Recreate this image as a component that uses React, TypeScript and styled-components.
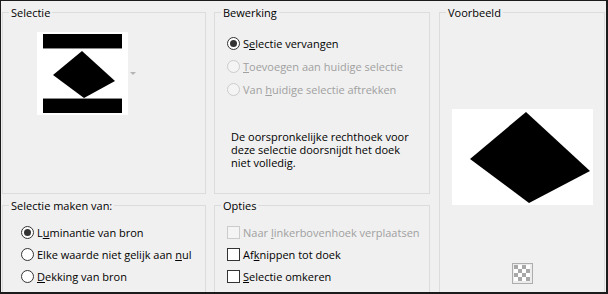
import React from "react";
import styled, { createGlobalStyle } from "styled-components";

const GlobalStyle = createGlobalStyle`
  html, body { margin: 0; padding: 0; background: #ffffff; }
  body { font-family: "Open Sans", "Noto Sans", sans-serif; font-size: 11px; color: #000; }
`;

const Window = styled.div`
  width: 608px;
  height: 294px;
  box-sizing: border-box;
  border-style: solid;
  border-color: #1b1b1b;
  border-width: 1px 2px 2px 1px;
  background: #f0f0f0;
  overflow: hidden;
  padding: 4px 0 0 1px;
  display: grid;
  grid-template-columns: 204px 216px 167px;
  grid-template-rows: 189px 100px;
  column-gap: 8px;
  row-gap: 4px;
`;

const Group = styled.fieldset<{ $span?: boolean; $shift?: number }>`
  margin: 0 0 0 ${(p) => p.$shift ?? 0}px;
  padding: 0;
  min-width: 0;
  box-sizing: border-box;
  border: 1px solid #dcdcdc;
  display: flex;
  flex-direction: column;
  grid-row: ${(p) => (p.$span ? "1 / span 2" : "auto")};
  grid-column: ${(p) => (p.$span ? "3" : "auto")};
  height: ${(p) => (p.$span ? "300px" : "auto")};
`;

const Legend = styled.legend`
  margin-left: 6px;
  padding: 0 2px;
  line-height: 15px;
  font-size: 11px;
  color: #000;
`;

const ImageRow = styled.div`
  display: flex;
  align-items: center;
  gap: 2px;
  margin: 12px 0 0 34px;
`;

const OptionList = styled.div<{ $top: number; $left: number; $row: number }>`
  display: flex;
  flex-direction: column;
  margin-top: ${(p) => p.$top}px;
  padding-left: ${(p) => p.$left}px;
  & > * {
    height: ${(p) => p.$row}px;
  }
`;

const Option = styled.div<{ $disabled?: boolean }>`
  display: flex;
  align-items: center;
  gap: 3px;
  white-space: nowrap;
  color: ${(p) => (p.$disabled ? "#a0a0a0" : "#000")};
`;

const RadioCircle = styled.span<{ $checked?: boolean; $disabled?: boolean }>`
  width: 13px;
  height: 13px;
  box-sizing: border-box;
  border-radius: 50%;
  border: 1px solid ${(p) => (p.$disabled ? "#cccccc" : "#333333")};
  background: ${(p) => (p.$disabled ? "#f4f4f4" : "#ffffff")};
  display: flex;
  align-items: center;
  justify-content: center;
  flex: none;
  &::after {
    content: "";
    display: ${(p) => (p.$checked ? "block" : "none")};
    width: 7px;
    height: 7px;
    border-radius: 50%;
    background: #333333;
  }
`;

const CheckSquare = styled.span<{ $disabled?: boolean }>`
  width: 13px;
  height: 13px;
  box-sizing: border-box;
  border: 1px solid ${(p) => (p.$disabled ? "#cccccc" : "#333333")};
  background: ${(p) => (p.$disabled ? "#f4f4f4" : "#ffffff")};
  flex: none;
`;

const Key = styled.span`
  text-decoration: underline;
  text-underline-offset: 1px;
`;

const Note = styled.p`
  margin: 29px 0 0 0;
  padding-left: 16px;
  line-height: 13px;
  color: #000;
`;

const PreviewBox = styled.div`
  margin: 89px auto 0;
  width: 141px;
  height: 96px;
  display: flex;
`;

const CheckerButton = styled.div`
  margin: 58px auto 0;
  width: 21px;
  height: 21px;
  box-sizing: border-box;
  border: 1px solid #adadad;
  background: #ececec;
  padding: 1px;
`;

const Checker = styled.div`
  width: 16px;
  height: 16px;
  background-color: #ffffff;
  background-image: conic-gradient(#ffffff 25%, #a8a8a8 0 50%, #ffffff 0 75%, #a8a8a8 0);
  background-size: 8px 8px;
`;

function Radio({ checked, disabled, children }: { checked?: boolean; disabled?: boolean; children: React.ReactNode }) {
  return (
    <Option $disabled={disabled}>
      <RadioCircle $checked={checked} $disabled={disabled} />
      <span>{children}</span>
    </Option>
  );
}

function Check({ disabled, children }: { disabled?: boolean; children: React.ReactNode }) {
  return (
    <Option $disabled={disabled}>
      <CheckSquare $disabled={disabled} />
      <span>{children}</span>
    </Option>
  );
}

export default function App() {
  return (
    <>
      <GlobalStyle />
      <Window>
        <Group>
          <Legend>Selectie</Legend>
          <ImageRow>
            <svg width="91" height="83" viewBox="0 0 91 83">
              <rect x="0" y="0" width="91" height="83" fill="#ffffff" />
              <rect x="6" y="2" width="79" height="14" fill="#000000" />
              <rect x="6" y="16" width="79" height="1" fill="#8a8a8a" />
              <rect x="6" y="66" width="79" height="1" fill="#8a8a8a" />
              <rect x="6" y="67" width="79" height="14" fill="#000000" />
              <polygon points="16,43 45,19 78,49 47,66" fill="#000000" />
            </svg>
            <svg width="6" height="3" viewBox="0 0 6 3">
              <polygon points="0,0 6,0 3,3" fill="#b4b4b4" />
            </svg>
          </ImageRow>
        </Group>

        <Group>
          <Legend>Bewerking</Legend>
          <OptionList $top={12} $left={12} $row={23}>
            <Radio checked>
              S<Key>e</Key>lectie vervangen
            </Radio>
            <Radio disabled>
              <Key>T</Key>oevoegen aan huidige selectie
            </Radio>
            <Radio disabled>
              Van <Key>h</Key>uidige selectie aftrekken
            </Radio>
          </OptionList>
          <Note>
            De oorspronkelijke rechthoek voor
            <br />
            deze selectie doorsnijdt het doek
            <br />
            niet volledig.
          </Note>
        </Group>

        <Group $span $shift={1}>
          <Legend>Voorbeeld</Legend>
          <PreviewBox>
            <svg width="141" height="96" viewBox="0 0 141 96">
              <rect x="0" y="0" width="141" height="96" fill="#ffffff" />
              <polygon points="18,50 74,3 138,62 77,94" fill="#000000" />
            </svg>
          </PreviewBox>
          <CheckerButton>
            <Checker />
          </CheckerButton>
        </Group>

        <Group>
          <Legend>Selectie maken van:</Legend>
          <OptionList $top={8} $left={18} $row={22}>
            <Radio checked>
              L<Key>u</Key>minantie van bron
            </Radio>
            <Radio>
              Elke waarde niet gelijk aan <Key>n</Key>ul
            </Radio>
            <Radio>
              <Key>D</Key>ekking van bron
            </Radio>
          </OptionList>
        </Group>

        <Group>
          <Legend>Opties</Legend>
          <OptionList $top={8} $left={12} $row={22}>
            <Check disabled>
              Naar <Key>l</Key>inkerbovenhoek verplaatsen
            </Check>
            <Check>
              Af<Key>k</Key>nippen tot doek
            </Check>
            <Check>
              <Key>S</Key>electie omkeren
            </Check>
          </OptionList>
        </Group>
      </Window>
    </>
  );
}
